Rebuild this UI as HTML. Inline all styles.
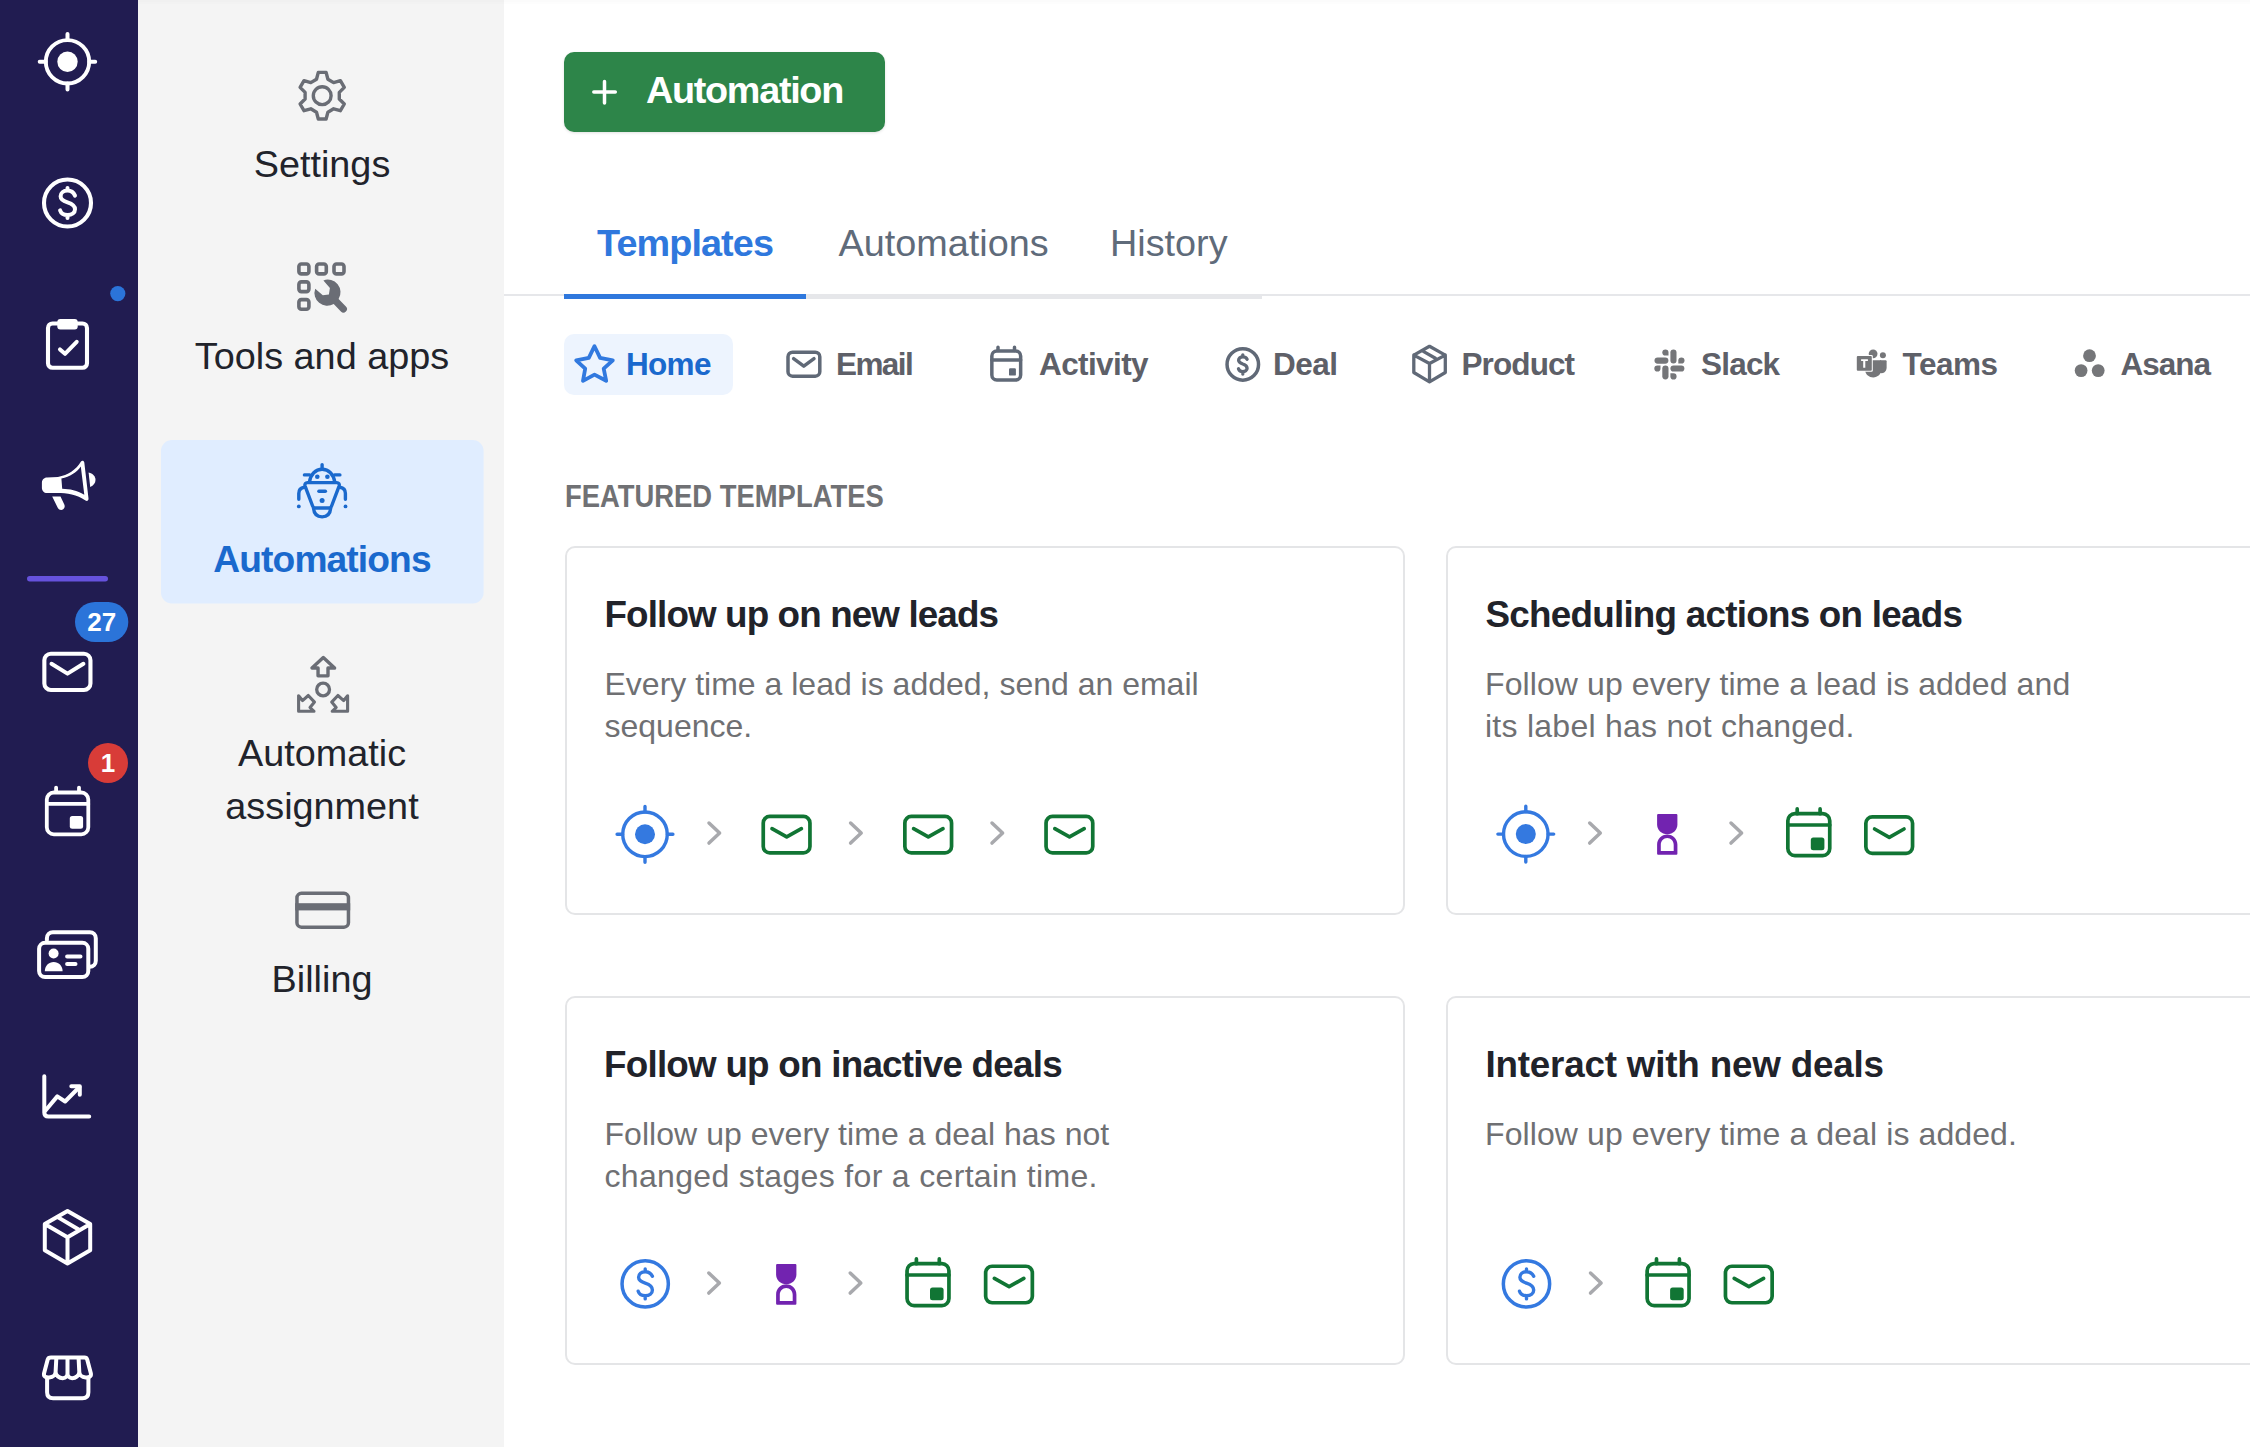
<!DOCTYPE html>
<html><head><meta charset="utf-8">
<style>
html,body{margin:0;padding:0;width:2250px;height:1447px;overflow:hidden;background:#fff;font-family:"Liberation Sans",sans-serif;}
.abs{position:absolute;white-space:nowrap;line-height:1;}
#nav{position:absolute;left:0;top:0;width:138px;height:1447px;background:#211c51;}
#side{position:absolute;left:138px;top:0;width:366px;height:1447px;background:#f4f4f4;}
svg{position:absolute;left:0;top:0;overflow:visible;}
.st{font-size:37.8px;color:#21232b;}
.chip{font-size:31.5px;font-weight:700;color:#5e6068;}
.ct{font-size:36.8px;font-weight:700;color:#21232a;letter-spacing:-1px;}
.cd{font-size:32px;color:#6f7073;line-height:42.5px;}
</style></head><body>
<div id="nav"></div>
<div id="side"></div>

<!-- NAV ICONS -->
<svg width="138" height="1447" viewBox="0 0 138 1447" fill="none" stroke="#fff" stroke-width="4" stroke-linecap="round" stroke-linejoin="round">
  <!-- leads target -->
  <circle cx="67.5" cy="61.8" r="21.7" stroke-width="3.9"/>
  <circle cx="67.5" cy="61.8" r="10.2" fill="#fff" stroke="none"/>
  <path d="M67.5,34 V40 M67.5,83.6 V89.6 M39.7,61.8 H45.8 M89.2,61.8 H95.2"/>
  <!-- dollar -->
  <circle cx="67.5" cy="203" r="23.5" stroke-width="4.1"/>
  <path d="M75,195.6 C73.5,192.2 70.8,190.6 67.5,190.6 C63.4,190.6 60.6,193 60.6,196.3 C60.6,199.7 63.6,201.2 67.5,202.4 C71.6,203.7 75,205.4 75,209.3 C75,212.9 71.9,215 67.5,215 C64,215 61.1,213.4 60.1,210.3 M67.5,188 V190.6 M67.5,215 V218"/>
  <!-- clipboard -->
  <rect x="48" y="323.5" width="39" height="44.3" rx="4.5" stroke-width="4.1"/>
  <rect x="57.3" y="319" width="20.4" height="10.4" rx="3" fill="#fff" stroke="none"/>
  <path d="M60,349.4 L65,353.8 L76.7,341.8"/>
  <!-- megaphone -->
  <path fill="#fff" stroke="none" fill-rule="evenodd" d="M47,477.6 L58,477 C68,475 76,470 81,461.5 C82,460 84,460.5 84.3,462.5 L88.5,498.5 C88.7,500.6 87,501.5 85.5,500.5 C77,494.5 67,493 57,493 L47,493.1 C44,493.1 41.9,490.5 41.9,488 L41.9,482.7 C41.9,480 44,477.6 47,477.6 Z M61.4,478.6 C70,476.5 76.5,472.5 80.8,466.5 L84.3,494.8 C77,490.5 70,489 62.2,488.8 Z"/>
  <path fill="#fff" stroke="none" d="M52.2,496.4 H60.5 L64.3,504.6 C65.5,507.2 64,509.8 61.3,509.9 C59.7,510 58.3,509.1 57.6,507.5 Z"/>
  <path fill="#fff" stroke="none" d="M88.6,472.6 C92.8,473.5 95.5,476.5 95.5,480 C95.5,483 93.5,485.6 90.2,487 Z"/>
  <!-- divider -->
  <rect x="27" y="576" width="81" height="5.5" rx="2.75" fill="#6652dd" stroke="none"/>
  <!-- mail -->
  <rect x="44.35" y="653.75" width="46.1" height="36.2" rx="6.5" stroke-width="4.1"/>
  <path d="M51.5,663.8 L67.5,673.6 L83.4,663.8"/>
  <!-- calendar -->
  <rect x="46.8" y="792.5" width="41.5" height="41.8" rx="7" stroke-width="3.8"/>
  <path d="M46.8,803.9 H88.3 M56.1,787.6 V792 M79,787.6 V792" stroke-width="3.8"/>
  <rect x="69.8" y="815.9" width="13.3" height="12.9" rx="2.5" fill="#fff" stroke="none"/>
  <!-- contacts -->
  <path d="M46.9,940 V938.2 C46.9,934.9 49.6,932.2 52.9,932.2 H89.8 C93.1,932.2 95.8,934.9 95.8,938.2 V960.8 C95.8,964.1 93.1,966.8 89.8,966.8 H89" />
  <rect x="39.1" y="942.8" width="49.2" height="34.2" rx="6" fill="#211c51"/>
  <circle cx="53.6" cy="953.5" r="5" fill="#fff" stroke="none"/>
  <path d="M44.8,971.3 C44.8,965.8 48.8,962 53.7,962 C58.6,962 62.6,965.8 62.6,971.3 Z" fill="#fff" stroke="none"/>
  <path d="M67.1,956.6 H80.5 M67.1,964 H75.5"/>
  <!-- chart -->
  <path d="M44.3,1076.3 V1112.6 Q44.3,1116.6 48.3,1116.6 H89.2"/>
  <path d="M45.5,1110.5 L57.3,1096.4 L65.1,1101.5 L79.4,1087"/>
  <path d="M71.3,1086.2 H79.8 V1094.8"/>
  <!-- box -->
  <path d="M67.5,1211 L90.2,1224.1 V1250.3 L67.5,1263.4 L44.8,1250.3 V1224.1 Z M44.8,1224.1 L67.5,1237.2 L90.2,1224.1 M67.5,1237.2 V1263.4 M57.3,1216.9 L78.2,1229.3"/>
  <!-- store -->
  <path d="M47.1,1378.5 V1392.3 Q47.1,1398.3 53.1,1398.3 H82.4 Q88.4,1398.3 88.4,1392.3 V1378.5"/>
  <path d="M51,1357.5 H84.5 Q86.6,1357.5 87.2,1359.5 L90.9,1373.6 C91.4,1377 88.8,1377.6 85.7,1377.4 C81.6,1377.1 79.3,1374.6 79.3,1372 C79.3,1375.5 75.7,1378.2 72.2,1378.2 C69,1378.2 67.5,1376 67.5,1373.5 C67.5,1376 66,1378.2 62.8,1378.2 C59.2,1378.2 55.6,1375.5 55.6,1372 C55.6,1374.6 53.3,1377.1 49.2,1377.4 C46.1,1377.6 43.5,1377 44,1373.6 L47.7,1359.5 Q48.3,1357.5 51,1357.5 Z M56.3,1358.5 L55.6,1372 M67.5,1358.5 V1373.5 M78.6,1358.5 L79.3,1372"/>
  <!-- dot -->
  <circle cx="117.8" cy="293.6" r="7.6" fill="#2b74d9" stroke="none"/>
  <!-- badges -->
  <rect x="75" y="602" width="53.3" height="40" rx="20" fill="#2b74d9" stroke="none"/>
  <circle cx="108" cy="763" r="20" fill="#d83c38" stroke="none"/>
</svg>
<div class="abs" style="left:75px;top:606px;width:53.3px;text-align:center;font-size:26px;font-weight:700;color:#fff;line-height:32px;">27</div>
<div class="abs" style="left:88px;top:747px;width:40px;text-align:center;font-size:26px;font-weight:700;color:#fff;line-height:32px;">1</div>


<!-- SIDEBAR ICONS -->
<svg width="2250" height="1447" viewBox="0 0 2250 1447" fill="none" stroke="#6a6d75" stroke-width="3.4" stroke-linecap="round" stroke-linejoin="round">
  <rect x="161" y="440" width="322.6" height="163.4" rx="11" fill="#e0edff" stroke="none"/>
  <!-- gear -->
  <path d="M316.5,79.2 L318.3,72.4 L326.1,72.4 L327.9,79.2 L333.6,82.6 L340.4,80.7 L344.3,87.4 L339.3,92.4 L339.3,99.0 L344.3,104.0 L340.4,110.7 L333.6,108.8 L327.9,112.2 L326.1,119.0 L318.3,119.0 L316.5,112.2 L310.8,108.8 L304.0,110.7 L300.1,104.0 L305.1,99.0 L305.1,92.4 L300.1,87.4 L304.0,80.7 L310.8,82.6Z"/>
  <circle cx="322.2" cy="95.7" r="8.9"/>
  <!-- tools -->
  <g stroke-width="3.6">
    <rect x="298.9" y="264" width="10" height="9.9" rx="2.5"/>
    <rect x="316.6" y="264" width="9.7" height="9.9" rx="2.5"/>
    <rect x="334" y="264" width="10" height="9.9" rx="2.5"/>
    <rect x="298.9" y="281.9" width="10" height="9.7" rx="2.5"/>
    <rect x="298.9" y="299.6" width="10" height="9.7" rx="2.5"/>
  </g>
  <path fill="#6a6d75" stroke="none" d="M323.4,280.4 A12.7,12.7 0 0 1 338.6,299 L345.9,306.5 A3.5,3.5 0 0 1 340.9,311.5 L333.7,303.9 A12.7,12.7 0 0 1 315.2,288.8 L322.8,295.3 L328.9,294.4 L329.9,288.1 Z"/>
  <!-- robot -->
  <g stroke="#1a69cd" stroke-width="3.4">
    <path d="M322.1,464.7 V468.2"/>
    <path d="M309.4,482.3 C310.5,474.2 315.6,469.2 322.1,469.2 C328.6,469.2 333.7,474.2 334.8,482.3"/>
    <path d="M304.4,474.9 H309.6 M334.6,474.9 H339.9"/>
    <path d="M307.4,482.6 H336.8 C338.5,482.6 339.7,484.2 339.2,485.8 L331.6,506 C331.1,507.3 329.9,508 328.6,508 H315.6 C314.3,508 313.1,507.3 312.6,506 L305,485.8 C304.5,484.2 305.7,482.6 307.4,482.6 Z"/>
    <path d="M313.5,508.2 C314,514 317.5,516.9 322.1,516.9 C326.7,516.9 330.2,514 330.7,508.2"/>
    <path d="M318.9,491.2 H325.4"/>
    <path d="M304.2,487.2 C300.6,487.8 298.8,490.5 298.8,493.5 V499.2 M340,487.2 C343.6,487.8 345.4,490.5 345.4,493.5 V499.2"/>
  </g>
  <g fill="#1a69cd" stroke="none">
    <circle cx="317.3" cy="476.8" r="2.3"/><circle cx="327.4" cy="476.8" r="2.3"/>
    <circle cx="322.1" cy="500.6" r="2.5"/>
    <circle cx="298.8" cy="506.4" r="1.9"/><circle cx="345.5" cy="506.4" r="1.9"/>
  </g>
  <!-- assignment -->
  <g stroke-width="3.4">
    <path d="M323.3,657.6 L334.6,668 H328 V675.85 H318.05 V668 H312 Z"/>
    <circle cx="323.1" cy="689.5" r="6.4" stroke-width="3.3"/>
    <path stroke-width="3.1" d="M298.6,695.8 V711.3 H314 L310,707.5 L314.5,702.1 L308.3,695.5 L302.5,700.6 Z"/>
    <path stroke-width="3.1" d="M347.6,695.8 V711.3 H332.2 L336.2,707.5 L331.7,702.1 L337.9,695.5 L343.7,700.6 Z"/>
  </g>
  <!-- card -->
  <rect x="296.95" y="893.35" width="51.5" height="33.8" rx="4.5" stroke-width="3.5"/>
  <rect x="295.2" y="903.2" width="55" height="7.2" fill="#6a6d75" stroke="none"/>
</svg>
<div class="abs st" style="left:138px;width:368px;text-align:center;top:145.8px;">Settings</div>
<div class="abs st" style="left:138px;width:368px;text-align:center;top:337.9px;">Tools and apps</div>
<div class="abs st" style="left:138px;width:368px;text-align:center;top:540.8px;font-weight:700;color:#1a69cd;font-size:37.2px;letter-spacing:-0.9px;">Automations</div>
<div class="abs st" style="left:138px;width:368px;text-align:center;top:735.4px;">Automatic</div>
<div class="abs st" style="left:138px;width:368px;text-align:center;top:788.1px;">assignment</div>
<div class="abs st" style="left:138px;width:368px;text-align:center;top:960.8px;">Billing</div>


<!-- MAIN -->
<div class="abs" style="left:138px;top:0;width:2112px;height:2px;background:rgba(0,0,0,0.016);"></div>
<div class="abs" style="left:138px;top:2px;width:2112px;height:2px;background:rgba(0,0,0,0.007);"></div>
<div class="abs" style="left:564.4px;top:51.8px;width:320.8px;height:80.4px;border-radius:10px;background:#2d8549;box-shadow:0 1px 3px rgba(0,0,0,0.12);"></div>
<svg width="2250" height="1447" viewBox="0 0 2250 1447" fill="none" stroke-linecap="round" stroke-linejoin="round">
  <path d="M604.5,81.4 V102.9 M593.8,92.1 H615.3" stroke="#fff" stroke-width="3.5"/>
</svg>
<div class="abs" style="left:646px;top:72.2px;font-size:37.8px;font-weight:700;color:#fff;letter-spacing:-1.3px;">Automation</div>

<!-- tabs -->
<div class="abs" style="left:504px;top:294px;width:1746px;height:2px;background:#e6e7ea;"></div>
<div class="abs" style="left:564px;top:294px;width:698px;height:5px;background:#e6e7ea;"></div>
<div class="abs" style="left:564.3px;top:294px;width:241.4px;height:5px;background:#2f78dd;"></div>
<div class="abs" style="left:597px;top:224.8px;font-size:37.8px;font-weight:700;color:#2f78dd;letter-spacing:-0.9px;">Templates</div>
<div class="abs" style="left:838.5px;top:224.9px;font-size:37.8px;color:#5f6b7a;">Automations</div>
<div class="abs" style="left:1110px;top:224.9px;font-size:37.8px;color:#5f6b7a;">History</div>

<!-- chips -->
<div class="abs" style="left:564px;top:334px;width:168.7px;height:61px;border-radius:10px;background:#edf4fe;"></div>
<div class="abs chip" style="left:626px;top:348.6px;color:#1a69cd;letter-spacing:-0.7px;">Home</div>
<div class="abs chip" style="left:836px;top:349px;letter-spacing:-1.6px;">Email</div>
<div class="abs chip" style="left:1039px;top:349px;letter-spacing:-0.6px;">Activity</div>
<div class="abs chip" style="left:1273px;top:349px;letter-spacing:-0.5px;">Deal</div>
<div class="abs chip" style="left:1461.5px;top:349px;letter-spacing:-0.9px;">Product</div>
<div class="abs chip" style="left:1701px;top:349px;letter-spacing:-0.8px;">Slack</div>
<div class="abs chip" style="left:1902.5px;top:349px;letter-spacing:-0.5px;">Teams</div>
<div class="abs chip" style="left:2120.5px;top:349px;letter-spacing:-1px;">Asana</div>

<!-- featured -->
<div class="abs" style="left:564.5px;top:480.9px;font-size:31.4px;font-weight:700;color:#707174;transform:scaleX(0.873);transform-origin:0 0;">FEATURED TEMPLATES</div>


<!-- cards -->
<div class="abs" style="left:565px;top:546px;width:840px;height:369px;box-sizing:border-box;border:2.5px solid #e4e5e7;border-radius:10px;"></div>
<div class="abs" style="left:1445.5px;top:546px;width:840px;height:369px;box-sizing:border-box;border:2.5px solid #e4e5e7;border-radius:10px;"></div>
<div class="abs" style="left:565px;top:996px;width:840px;height:369px;box-sizing:border-box;border:2.5px solid #e4e5e7;border-radius:10px;"></div>
<div class="abs" style="left:1445.5px;top:996px;width:840px;height:369px;box-sizing:border-box;border:2.5px solid #e4e5e7;border-radius:10px;"></div>

<div class="abs ct" style="left:604.5px;top:597px;letter-spacing:-0.88px;">Follow up on new leads</div>
<div class="abs cd" style="left:604.5px;top:662.7px;">Every time a lead is added, send an email</div>
<div class="abs cd" style="left:604.5px;top:705.2px;">sequence.</div>
<div class="abs ct" style="left:1485.5px;top:597px;letter-spacing:-0.75px;">Scheduling actions on leads</div>
<div class="abs cd" style="left:1485px;top:662.7px;letter-spacing:0.09px;">Follow up every time a lead is added and</div>
<div class="abs cd" style="left:1485px;top:705.2px;letter-spacing:0.26px;">its label has not changed.</div>
<div class="abs ct" style="left:604px;top:1047px;letter-spacing:-0.76px;">Follow up on inactive deals</div>
<div class="abs cd" style="left:604.5px;top:1112.7px;letter-spacing:0.04px;">Follow up every time a deal has not</div>
<div class="abs cd" style="left:604.5px;top:1155.2px;letter-spacing:0.33px;">changed stages for a certain time.</div>
<div class="abs ct" style="left:1485.5px;top:1047px;letter-spacing:-0.2px;">Interact with new deals</div>
<div class="abs cd" style="left:1485px;top:1112.7px;letter-spacing:0.1px;">Follow up every time a deal is added.</div>


<!-- CHIP + FLOW ICONS -->
<svg width="2250" height="1447" viewBox="0 0 2250 1447" fill="none" stroke-linecap="round" stroke-linejoin="round">
  <defs>
    <g id="lead"><circle cx="0" cy="0" r="22.3" stroke="#3479e0" stroke-width="3.4"/><circle cx="0" cy="0" r="10" fill="#3479e0"/><path d="M0,-22.3 V-27.9 M0,22.3 V27.9 M-22.3,0 H-27.9 M22.3,0 H27.9" stroke="#3479e0" stroke-width="3.4"/></g>
    <g id="dollar"><circle cx="0" cy="0" r="23.15" stroke="#3479e0" stroke-width="3.5"/><path stroke="#3479e0" stroke-width="3.4" d="M7.2,-7.6 C5.8,-10.8 3.2,-12.2 0,-12.2 C-3.9,-12.2 -6.6,-9.9 -6.6,-6.7 C-6.6,-3.4 -3.7,-2 0,-0.8 C3.9,0.5 7.2,2.2 7.2,6 C7.2,9.6 4.2,11.7 0,11.7 C-3.4,11.7 -6.1,10.2 -7,7.3 M0,-15 V-12.2 M0,11.7 V15"/></g>
    <path id="chev" d="M0,0 L10.6,10 L0,20.1" stroke="#a8a9ad" stroke-width="3.5"/>
    <g id="mail"><rect x="1.85" y="1.85" width="46.7" height="36.5" rx="6.5" stroke="#117534" stroke-width="3.7"/><path d="M10.6,14 L25.3,22.3 L40,14" stroke="#117534" stroke-width="3.7"/></g>
    <g id="cal"><rect x="1.85" y="1.85" width="41.9" height="41.9" rx="7" stroke="#117534" stroke-width="3.7"/><path d="M1.85,13.2 H43.75 M11.2,-2.9 V1.85 M34.1,-2.9 V1.85" stroke="#117534" stroke-width="3.7"/><rect x="24.8" y="25.6" width="13.6" height="12.8" rx="2.5" fill="#117534"/></g>
    <g id="hour"><path fill="#7223b0" d="M0,1 Q0,0 1,0 H19.3 Q20.3,0 20.3,1 V10.4 C20.3,15.9 15.9,20.1 10.15,20.1 C4.4,20.1 0,15.9 0,10.4 Z"/><path fill="#7223b0" fill-rule="evenodd" d="M10.15,20.3 C15.9,20.3 20.3,24.9 20.3,30.4 V39.7 Q20.3,40.7 19.3,40.7 H1 Q0,40.7 0,39.7 V30.4 C0,24.9 4.4,20.3 10.15,20.3 Z M10.15,23.9 C13.9,23.9 16.6,26.9 16.6,30.9 V37 H3.7 V30.9 C3.7,26.9 6.4,23.9 10.15,23.9 Z"/></g>
  </defs>
  <!-- card 1 -->
  <g transform="translate(565,546)">
    <use href="#lead" x="80" y="288.3"/>
    <use href="#chev" x="144" y="277"/><use href="#mail" x="196.4" y="268.6"/>
    <use href="#chev" x="285.6" y="277"/><use href="#mail" x="338" y="268.6"/>
    <use href="#chev" x="427" y="277"/><use href="#mail" x="479.2" y="268.6"/>
  </g>
  <!-- card 2 -->
  <g transform="translate(1445.5,546)">
    <use href="#lead" x="80.3" y="288.1"/>
    <use href="#chev" x="144.2" y="277"/><use href="#hour" x="211.6" y="268.1"/>
    <use href="#chev" x="285.5" y="277"/><use href="#cal" x="340.5" y="265.8"/>
    <use href="#mail" x="418.5" y="269"/>
  </g>
  <!-- card 3 -->
  <g transform="translate(565,996)">
    <use href="#dollar" x="80.2" y="287.9"/>
    <use href="#chev" x="143.8" y="277"/><use href="#hour" x="211.1" y="268"/>
    <use href="#chev" x="285.2" y="277"/><use href="#cal" x="340.2" y="265.8"/>
    <use href="#mail" x="418.8" y="268.4"/>
  </g>
  <!-- card 4 -->
  <g transform="translate(1445.5,996)">
    <use href="#dollar" x="81" y="287.9"/>
    <use href="#chev" x="145" y="277"/><use href="#cal" x="199.8" y="265.8"/>
    <use href="#mail" x="278.1" y="268.4"/>
  </g>

  <!-- chip icons -->
  <path d="M594.5,346.2 L600.1,357.9 L612.8,360.3 L603.7,368.7 L606.2,380.8 L594.5,374.6 L583,380.8 L585.2,368.7 L576.2,360.3 L588.8,357.9 Z" stroke="#3179df" stroke-width="3.8"/>
  <g stroke="#606977" stroke-width="3.5">
    <rect x="788" y="352.2" width="31.8" height="24" rx="4.5"/>
    <path d="M793.6,358.7 L803.8,366.1 L814,358.7"/>
    <rect x="991.85" y="351.05" width="28.8" height="29" rx="5"/>
    <path d="M991.85,359.9 H1020.65 M998,347.3 V350.5 M1014.5,347.3 V350.5"/>
    <circle cx="1242.8" cy="364.45" r="15.75"/>
    <path stroke-width="3.3" d="M1247.1,359.2 C1246.2,357.5 1244.6,356.9 1242.8,356.9 C1240.3,356.9 1238.6,358.3 1238.6,360.3 C1238.6,362.5 1240.5,363.2 1242.8,364 C1245.3,364.8 1247.1,365.8 1247.1,368.2 C1247.1,370.3 1245.2,371.6 1242.8,371.6 C1240.8,371.6 1239.2,370.6 1238.5,368.8 M1242.8,354.8 V356.9 M1242.8,371.6 V374"/>
    <path stroke-width="3.3" d="M1429.5,346.3 L1445.3,355.1 V372.5 L1429.5,381.8 L1413.8,372.5 V355.1 Z M1413.8,355.1 L1429.5,363.5 L1445.3,355.1 M1429.5,363.5 V381.8 M1423.3,351.4 L1435.4,358.2"/>
  </g>
  <rect x="1009" y="368.2" width="6.9" height="7.4" rx="1.2" fill="#606977"/>
  <!-- slack -->
  <g fill="#757679">
    <rect x="1670.4" y="349.5" width="6.1" height="14.1" rx="3.05"/>
    <rect x="1654.5" y="357.4" width="13.9" height="6.3" rx="3.15"/>
    <rect x="1670.4" y="365.4" width="14" height="6.2" rx="3.1"/>
    <rect x="1662.3" y="365.4" width="6.2" height="14" rx="3.1"/>
    <path d="M1668.5,355.6 H1665.4 A3.1,3.1 0 1 1 1668.5,352.5 Z"/>
    <path d="M1678.3,363.6 V360.5 A3.1,3.1 0 1 1 1681.4,363.6 Z"/>
    <path d="M1660.5,365.4 V368.5 A3.1,3.1 0 1 1 1657.4,365.4 Z"/>
    <path d="M1670.4,373.3 H1673.5 A3.1,3.1 0 1 1 1670.4,376.4 Z"/>
  </g>
  <!-- teams -->
  <g fill="#757679">
    <circle cx="1873.1" cy="353.8" r="4.4"/>
    <circle cx="1882.9" cy="355.2" r="3"/>
    <path d="M1880,360.2 H1885.6 Q1886.6,360.2 1886.6,361.2 V367.5 C1886.6,370.8 1884.5,373.2 1881.8,373.2 C1880.9,373.2 1880,373 1879.4,372.6 Z"/>
    <path d="M1868,360.2 H1880.4 Q1881.4,360.2 1881.4,361.2 V369.5 C1881.4,374 1877.6,377.4 1873.2,377.4 C1869,377.4 1865.8,374.7 1865.2,371 Z"/>
    <rect x="1855.8" y="355.1" width="17" height="16.7" rx="1.3" fill="#fff"/>
    <rect x="1856.8" y="356.1" width="15" height="14.7" rx="1"/>
  </g>
  <path d="M1861.1,359.2 H1867.9 V360.9 H1865.3 V367.8 H1863.2 V360.9 H1861.1 Z" fill="#fff"/>
  <!-- asana -->
  <g fill="#757679">
    <circle cx="2089.5" cy="355.7" r="6.4"/>
    <circle cx="2081.1" cy="370.6" r="6.4"/>
    <circle cx="2098.2" cy="370.6" r="6.4"/>
  </g>
</svg>

</body></html>
